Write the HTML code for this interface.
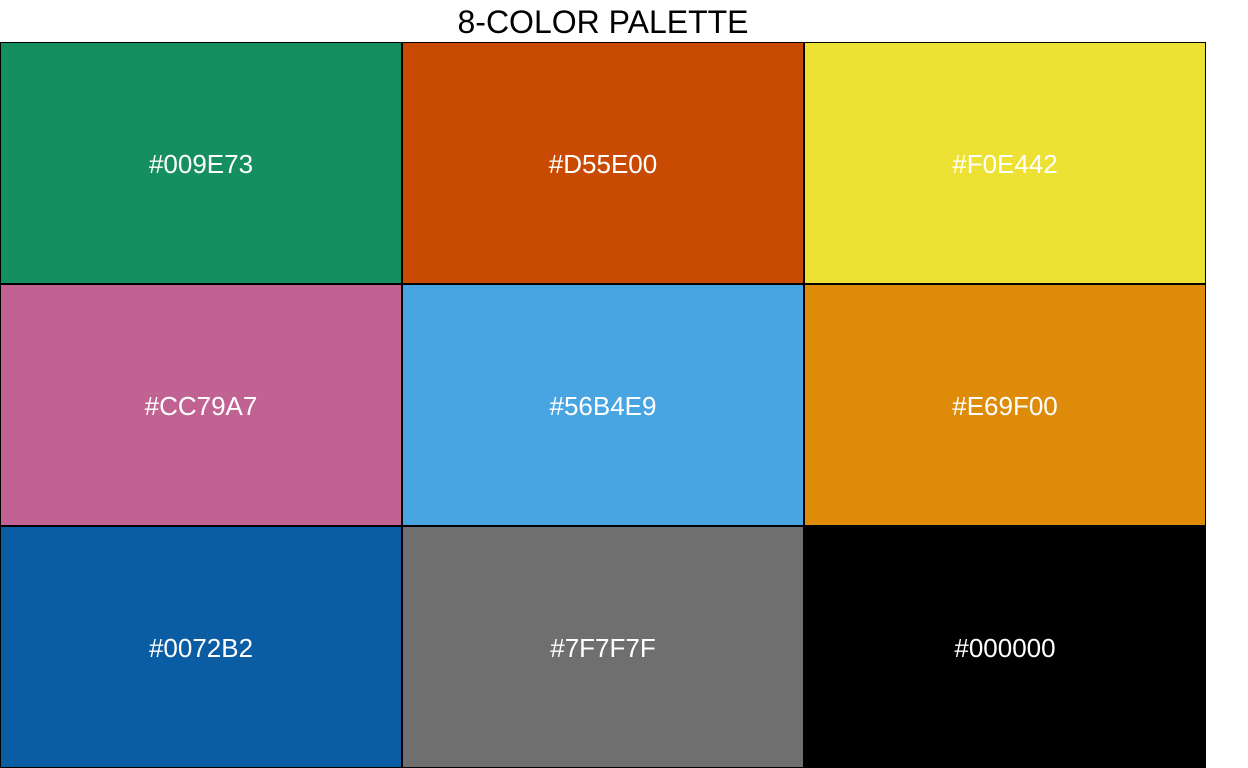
<!DOCTYPE html>
<html><head><style>
body{margin:0;width:1248px;height:768px;background:#fff;position:relative;overflow:hidden;font-family:"Liberation Sans",Arial,sans-serif}
.t{position:absolute;left:0;width:1206px;top:3px;text-align:center;font-size:32px;line-height:38px;color:#000}
.c{position:absolute;width:402px;height:242px;box-sizing:border-box;border:1px solid #000;color:#fff;font-size:26px;display:flex;align-items:center;justify-content:center;padding-top:3px}
</style></head><body>
<div class="t">8-COLOR PALETTE</div>
<div class="c" style="left:0;top:42px;background:#158F5F">#009E73</div>
<div class="c" style="left:402px;top:42px;background:#C94A03">#D55E00</div>
<div class="c" style="left:804px;top:42px;background:#EDE133">#F0E442</div>
<div class="c" style="left:0;top:284px;background:#C06393">#CC79A7</div>
<div class="c" style="left:402px;top:284px;background:#48A5E2">#56B4E9</div>
<div class="c" style="left:804px;top:284px;background:#DE8B09">#E69F00</div>
<div class="c" style="left:0;top:526px;background:#0A5DA2">#0072B2</div>
<div class="c" style="left:402px;top:526px;background:#6F6F6F">#7F7F7F</div>
<div class="c" style="left:804px;top:526px;background:#000">#000000</div>
</body></html>
